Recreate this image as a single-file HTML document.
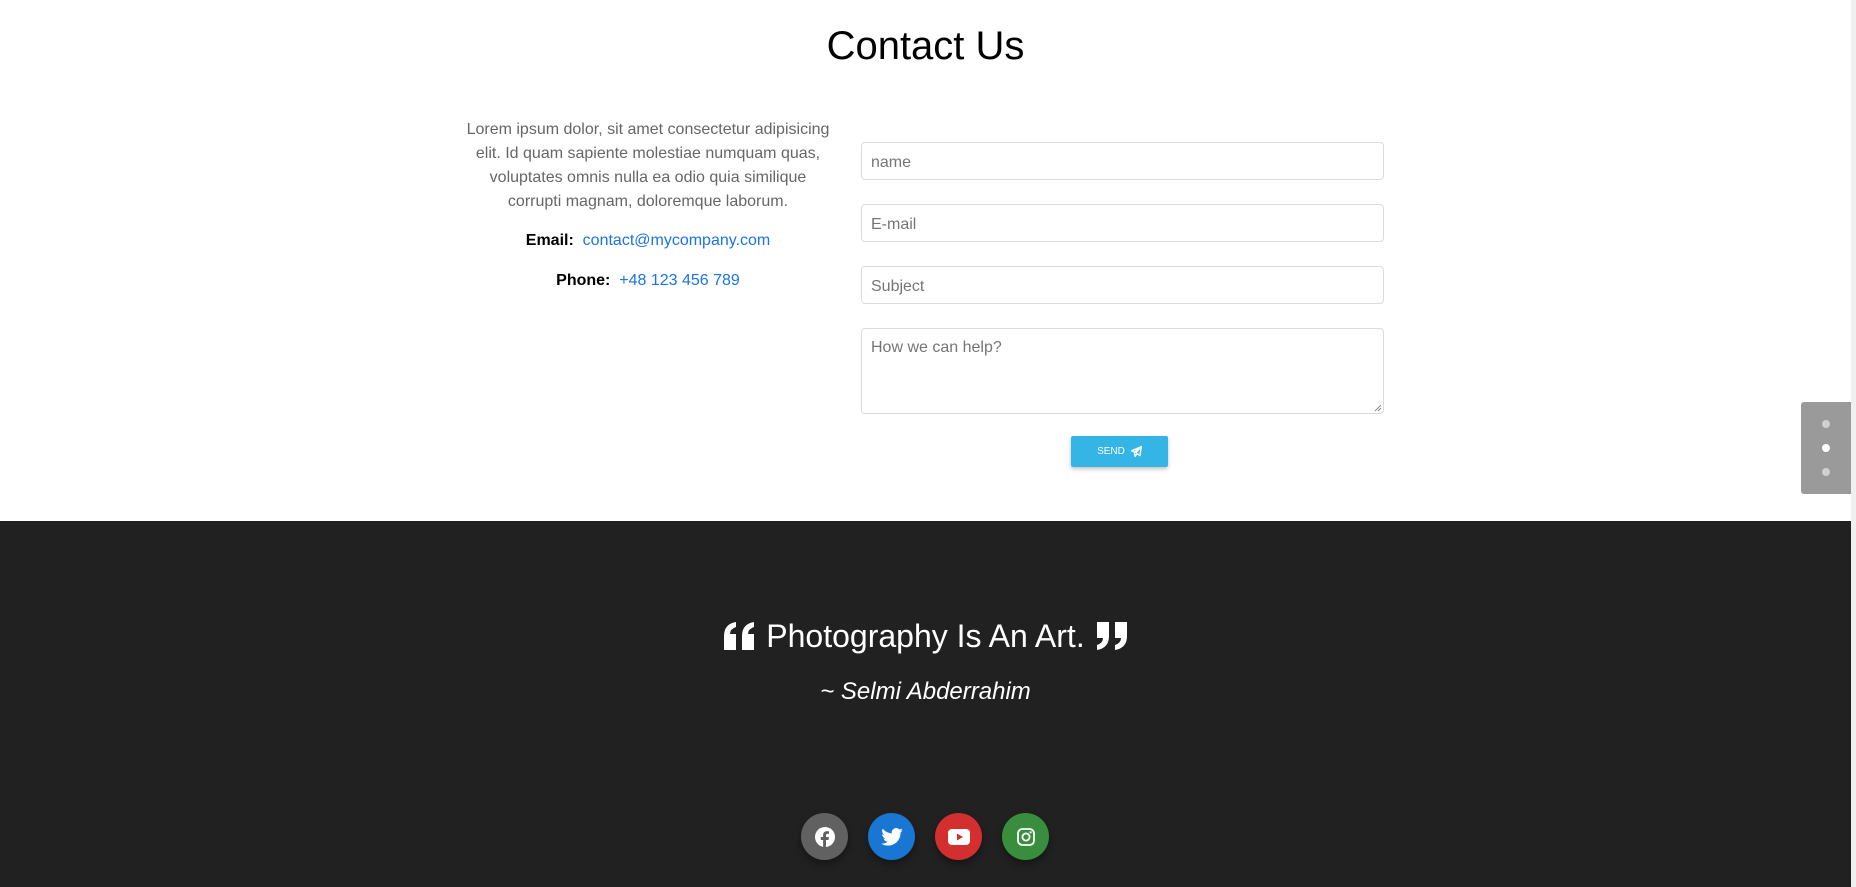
<!DOCTYPE html>
<html><head><meta charset="utf-8"><style>
*{box-sizing:border-box;margin:0;padding:0}
body{width:1856px;height:887px;overflow:hidden;font-family:"Liberation Sans",Arial,sans-serif;background:#fff;position:relative}
.abs{position:absolute}
h1{position:absolute;left:0;width:1851px;text-align:center;top:21px;font-size:40px;font-weight:400;color:#000;line-height:50px}
.lorem{left:465px;width:366px;top:118px;text-align:center;color:#666;font-size:16px;line-height:24px}
.info{left:460px;width:376px;text-align:center;font-size:16px;line-height:20px}
.info b{color:#000}.info a{color:#1a73e8;text-decoration:none}
.inp{left:861px;width:523px;height:38px;border:1px solid #dcdcdc;border-radius:4px;color:#757575;font-size:16px;padding:2px 9px 0;line-height:36px}
.btn{left:1071px;top:436px;width:97px;height:31px;background:#34b5e5;box-shadow:0 2px 4px rgba(0,0,0,.25);border-radius:2px;color:#fff;font-size:10px;display:flex;align-items:center;justify-content:center;gap:6px}
.foot{left:0;top:521px;width:1851px;height:366px;background:#212121}
.q{left:0;width:1851px;text-align:center;color:#fff}
.circ{width:47px;height:47px;border-radius:50%;top:813px;display:flex;align-items:center;justify-content:center;box-shadow:0 4px 8px rgba(0,0,0,.35)}
.nav{left:1801px;top:402px;width:50px;height:92px;background:#9a9a9a;border-radius:3px 0 0 3px}
.dot{width:8px;height:8px;border-radius:50%;background:#d0d0d0;left:21px}
.sb{left:1851px;top:0;width:5px;height:887px;background:#f0f0f0}
</style></head><body>
<h1>Contact Us</h1>
<div class="abs lorem">Lorem ipsum dolor, sit amet consectetur adipisicing elit. Id quam sapiente molestiae numquam quas, voluptates omnis nulla ea odio quia similique corrupti magnam, doloremque laborum.</div>
<div class="abs info" style="top:231px"><b>Email:</b>&nbsp; <a>contact@mycompany.com</a></div>
<div class="abs info" style="top:271px"><b>Phone:</b>&nbsp; <a>+48 123 456 789</a></div>
<div class="abs inp" style="top:142px">name</div>
<div class="abs inp" style="top:204px">E-mail</div>
<div class="abs inp" style="top:266px">Subject</div>
<div class="abs inp" style="top:328px;height:86px;line-height:20px;padding-top:9px">How we can help?<svg class="abs" style="right:1px;bottom:1px" width="8" height="8" viewBox="0 0 8 8"><path d="M1 7L7 1M4 7L7 4" stroke="#888" stroke-width="1"/></svg></div>
<div class="abs btn">SEND <svg width="11" height="11" viewBox="0 0 16 16"><path d="M15 1L1 7l4 2 1 6 3-4 4 3z M5 9l9-7-7 8" fill="none" stroke="#fff" stroke-width="2" stroke-linejoin="round"/></svg></div>
<div class="abs foot"></div>
<div class="abs q" style="top:617px;font-size:32px;line-height:38px;display:flex;justify-content:center;align-items:center;gap:10px">
<svg width="32" height="28" viewBox="0 0 32 28"><path d="M0 14Q0 2 12 0v5Q6 7 6 12h6v16H0zM18 14Q18 2 30 0v5Q24 7 24 12h6v16H18z" fill="#fff"/></svg>
<span>Photography Is An Art.</span>
<svg width="32" height="28" viewBox="0 0 32 28"><path d="M14 14Q14 26 2 28v-5Q8 21 8 16H2V0h12zM32 14Q32 26 20 28v-5Q26 21 26 16h-6V0h12z" fill="#fff"/></svg>
</div>
<div class="abs q" style="top:678px;font-size:24px;line-height:28px;font-style:italic">~ Selmi Abderrahim</div>
<div class="abs circ" style="left:801px;background:#616161"><svg width="20" height="20" viewBox="0 0 20 20"><circle cx="10" cy="10" r="10" fill="#fff"/><path d="M11 20v-7h2.5l.4-3H11V8.3c0-.8.3-1.4 1.4-1.4H14V4.3c-.3 0-1.2-.1-2.2-.1-2.2 0-3.7 1.3-3.700 3.8V10H5.8v3h2.3v7z" fill="#616161"/></svg></div>
<div class="abs circ" style="left:868px;background:#1976d2"><svg width="22" height="18" viewBox="0 0 24 20"><path d="M24 2.4a10 10 0 0 1-2.8.8A5 5 0 0 0 23.3.5a10 10 0 0 1-3.1 1.2A4.9 4.9 0 0 0 11.8 6 14 14 0 0 1 1.7.9a4.9 4.9 0 0 0 1.5 6.6A4.9 4.9 0 0 1 1 6.9a4.9 4.9 0 0 0 3.9 4.8 5 5 0 0 1-2.2.1 4.9 4.9 0 0 0 4.6 3.4A9.9 9.9 0 0 1 0 17.300 14 14 0 0 0 7.5 19.5c9.1 0 14-7.5 14-14v-.6A10 10 0 0 0 24 2.4z" fill="#fff"/></svg></div>
<div class="abs circ" style="left:935px;background:#d32f2f"><svg width="22" height="16" viewBox="0 0 22 16"><rect width="22" height="16" rx="4" fill="#fff"/><path d="M9 4.5v7l6-3.5z" fill="#d32f2f"/></svg></div>
<div class="abs circ" style="left:1002px;background:#388e3c"><svg width="18" height="18" viewBox="0 0 18 18"><rect x="1" y="1" width="16" height="16" rx="4.5" fill="none" stroke="#fff" stroke-width="1.8"/><circle cx="9" cy="9" r="3.6" fill="none" stroke="#fff" stroke-width="1.8"/><circle cx="13.6" cy="4.4" r="1.1" fill="#fff"/></svg></div>
<div class="abs nav"><div class="abs dot" style="top:18px"></div><div class="abs dot" style="top:42px;background:#fff"></div><div class="abs dot" style="top:66px"></div></div>
<div class="abs sb"></div>
</body></html>
